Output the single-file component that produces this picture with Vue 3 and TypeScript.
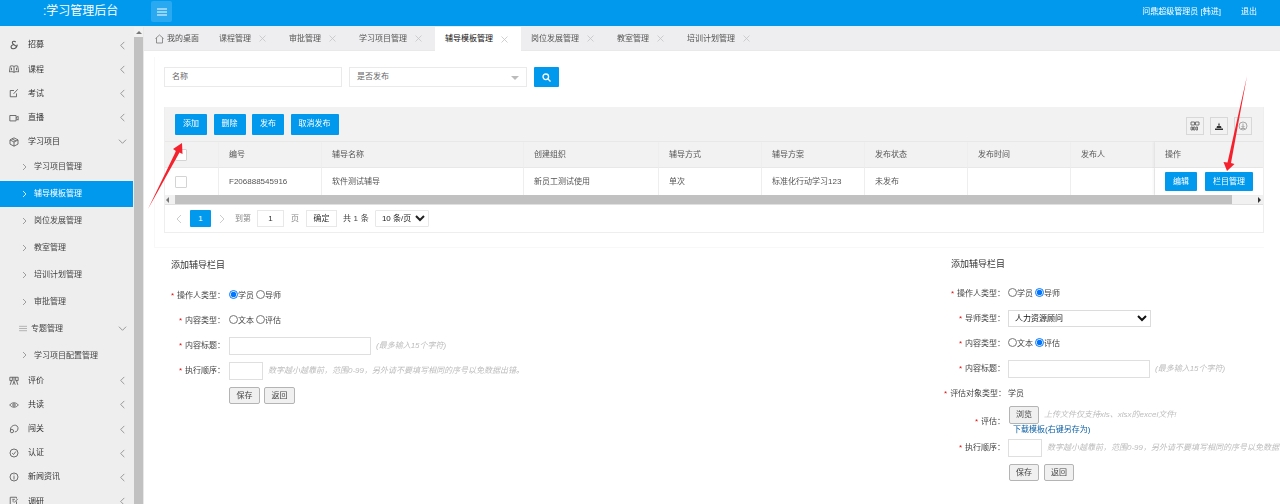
<script setup lang="ts">
interface NavItem { label: string; icon?: string; open?: boolean; sub?: boolean; active?: boolean; list?: boolean }
const nav: NavItem[] = [
  { label: '招募', icon: 'amp' },
  { label: '课程', icon: 'book' },
  { label: '考试', icon: 'edit' },
  { label: '直播', icon: 'video' },
  { label: '学习项目', icon: 'cube', open: true },
  { label: '学习项目管理', sub: true },
  { label: '辅导模板管理', sub: true, active: true },
  { label: '岗位发展管理', sub: true },
  { label: '教室管理', sub: true },
  { label: '培训计划管理', sub: true },
  { label: '审批管理', sub: true },
  { label: '专题管理', sub: true, list: true },
  { label: '学习项目配置管理', sub: true },
  { label: '评价', icon: 'rate' },
  { label: '共读', icon: 'eye' },
  { label: '闯关', icon: 'rocket' },
  { label: '认证', icon: 'check' },
  { label: '新闻资讯', icon: 'info' },
  { label: '调研', icon: 'survey' }
]
const tabs = [
  { label: '课程管理', wide: false }, { label: '审批管理', wide: false }, { label: '学习项目管理', wide: true },
  { label: '辅导模板管理', wide: true, active: true }, { label: '岗位发展管理', wide: true },
  { label: '教室管理', wide: false }, { label: '培训计划管理', wide: true }
]
const head = ['编号', '辅导名称', '创建组织', '辅导方式', '辅导方案', '发布状态', '发布时间', '发布人']
const row = ['F206888545916', '软件测试辅导', '新员工测试使用', '单次', '标准化行动学习123', '未发布', '', '']
const orderHint = '数字越小越靠前，范围0-99，另外请不要填写相同的序号以免数据出错。'
</script>

<template>
  <div class="page">
    <header class="top">
      <div class="brand">:学习管理后台</div>
      <button class="menu" aria-label="菜单">
        <svg width="10" height="8" viewBox="0 0 10 8"><path d="M0 1h10M0 4h10M0 7h10" stroke="#fff" stroke-width="1" /></svg>
      </button>
      <div class="user">问鼎超级管理员 [韩进]</div>
      <div class="logout">退出</div>
    </header>

    <div class="body">
      <aside class="side">
        <nav class="nav">
          <div
            v-for="item in nav"
            :key="item.label"
            class="nav-item"
            :class="{ sub: item.sub, active: item.active }"
          >
            <svg v-if="item.sub && item.list" class="ic list-ic" viewBox="0 0 10 8"><path d="M0 1.5h9M0 4h9M0 6.500h9" stroke="#999" fill="none" stroke-width=".8" /></svg>
            <svg v-else-if="item.sub" class="sub-arrow" viewBox="0 0 5 8"><path d="M1 1l3 3-3 3" fill="none" stroke="currentColor" stroke-width=".8" /></svg>
            <svg v-else class="ic" viewBox="0 0 12 12" fill="none" stroke="#555" stroke-width="1">
              <path v-if="item.icon === 'amp'" d="M8 2.500C7 1 4 1.200 4 3c0 2 5.500 5 5.500 5M10 5.500C9.500 8 8 10.500 5 10.500 2.500 10.500 1.500 8 3.500 6.500L5 5.500" stroke-width="1.300" />
              <path v-else-if="item.icon === 'book'" d="M6 3C4.500 2 3 2 1.500 2.500L.5 9.500C2.500 9 4.500 9 6 10c1.500-1 3.500-1 5.500-.5l-1-7C9 2 7.500 2 6 3zM6 3v7M3 4.500v3M9 4.500v3" />
              <path v-else-if="item.icon === 'edit'" d="M9 6.500V10.500H1.500V3H6M5.500 7L10.500 1.500" />
              <path v-else-if="item.icon === 'video'" d="M1 3h7.500v6.500H1zM8.500 5.500L11 4v4.500L8.500 7" />
              <path v-else-if="item.icon === 'cube'" d="M6 1l4.800 2.500v5L6 11 1.200 8.500v-5zM1.200 3.500L6 6l4.800-2.500M6 6v5M3.500 2.200L8.500 4.800" />
              <path v-else-if="item.icon === 'rate'" d="M1 1.500h10M1 1.500v4h3v-4M8 1.500v4h3v-4M6 1.500v5M3 5.500L1.500 10.500M9 5.500l1.500 5M6 6.500l-1.500 4M6 6.500l1.500 4" />
              <g v-else-if="item.icon === 'eye'"><path d="M.8 6C3.500 2.500 8.500 2.500 11.200 6 8.500 9.500 3.500 9.500.8 6z" /><circle cx="6" cy="6" r="1.500" /></g>
              <g v-else-if="item.icon === 'rocket'"><path d="M2 7.500C1 3.500 5 1 8 1.500c3 .8 3.500 4 2 6.500-.5.800-2 1.500-3 1.500" /><circle cx="3.500" cy="8.500" r="2" /></g>
              <g v-else-if="item.icon === 'check'"><circle cx="6" cy="6" r="4.800" /><path d="M3.800 6.200L5.500 7.800 8.200 4.200" /></g>
              <g v-else-if="item.icon === 'info'"><circle cx="6" cy="6" r="4.800" /><path d="M6 3v1M6 5v4" /></g>
              <path v-else d="M9 6.500V11H1.500V1.500H9V3M4 4h3M4 6h2M6 8l4.500-4.500" />
            </svg>
            <span class="nav-label">{{ item.label }}</span>
            <svg v-if="item.open || item.list" class="chev" viewBox="0 0 10 10"><path d="M1 3l4 4 4-4" fill="none" stroke="#777" stroke-width=".8" /></svg>
            <svg v-else-if="!item.sub" class="chev" viewBox="0 0 10 10"><path d="M7 1L3 5l4 4" fill="none" stroke="#777" stroke-width=".8" /></svg>
          </div>
        </nav>
        <div class="side-scroll"><span class="up"></span><span class="thumb"></span></div>
      </aside>

      <main class="main">
        <div class="tabs">
          <div class="tab home">
            <svg width="9" height="10" viewBox="0 0 9 10"><path d="M.5 4.500L4.500 1l4 3.500M1.500 4v5h6V4" fill="none" stroke="#777" stroke-width=".8" /></svg>
            <span>我的桌面</span>
          </div>
          <div v-for="t in tabs" :key="t.label" class="tab" :class="{ active: t.active, wide: t.wide }">
            <span>{{ t.label }}</span>
            <svg class="close" width="7" height="7" viewBox="0 0 7 7"><path d="M.5.500l6 6M6.500.500l-6 6" stroke="#c4c4c4" stroke-width=".8" /></svg>
          </div>
        </div>

        <section class="card">
          <div class="search">
            <div class="field name">名称</div>
            <div class="field pick">是否发布<span class="tri"></span></div>
            <button class="btn search-btn" aria-label="搜索">
              <svg width="9" height="9" viewBox="0 0 9 9"><circle cx="3.800" cy="3.800" r="2.800" fill="none" stroke="#fff" stroke-width="1.300" /><path d="M6 6l2.500 2.500" stroke="#fff" stroke-width="1.300" /></svg>
            </button>
          </div>

          <div class="grid-box">
            <div class="toolbar">
              <button class="btn">添加</button>
              <button class="btn">删除</button>
              <button class="btn">发布</button>
              <button class="btn">取消发布</button>
              <div class="tools">
                <span class="tool"><svg width="10" height="10" viewBox="0 0 10 10" fill="none" stroke="#666" stroke-width=".9"><path d="M1 1h3.500v3H1zM5.500 1H9v3H5.500zM1 6h1.500v3H1zM3.500 6H5v3H3.500zM6 6h1.500v3H6z" /></svg></span>
                <span class="tool"><svg width="10" height="10" viewBox="0 0 10 10"><path d="M1 9h8V7.500H1zM2.500 7L3 5h4l.5 2zM4 4.500l1-3 1 3z" fill="#333" /></svg></span>
                <span class="tool"><svg width="10" height="10" viewBox="0 0 10 10" fill="none" stroke="#888" stroke-width=".7"><circle cx="5" cy="5" r="4" /><path d="M5 2.500v4M3.500 5L5 6.500 6.500 5M3 7.500h4" /></svg></span>
              </div>
            </div>
            <div class="table">
              <div class="cell th chk"><span class="box"></span></div>
              <div v-for="h in head" :key="h" class="cell th">{{ h }}</div>
              <div class="cell th op">操作</div>
              <div class="cell chk"><span class="box"></span></div>
              <div v-for="(c, i) in row" :key="i" class="cell">{{ c }}</div>
              <div class="cell op ops">
                <button class="btn small">编辑</button>
                <button class="btn small">栏目管理</button>
              </div>
            </div>
            <div class="hscroll">
              <span class="arr l"></span>
              <span class="track"></span>
              <span class="arr r"></span>
            </div>
            <div class="pager">
              <svg class="pg-arrow" viewBox="0 0 6 10"><path d="M5 1L1 5l4 4" fill="none" stroke="#ccc" /></svg>
              <span class="pg-cur">1</span>
              <svg class="pg-arrow" viewBox="0 0 6 10"><path d="M1 1l4 4-4 4" fill="none" stroke="#ccc" /></svg>
              <span class="pg-text go">到第</span>
              <span class="pg-input">1</span>
              <span class="pg-text">页</span>
              <span class="pg-ok">确定</span>
              <span class="pg-total">共 1 条</span>
              <select class="pg-select"><option>10 条/页</option></select>
            </div>
          </div>
        </section>

        <section class="forms">
          <div class="form">
            <h3 class="form-title">添加辅导栏目</h3>
            <div class="frow">
              <label class="flabel"><i>*</i>操作人类型：</label>
              <div class="fval"><input class="rd" type="radio" name="a1" checked /><span>学员</span><input class="rd" type="radio" name="a1" /><span>导师</span></div>
            </div>
            <div class="frow">
              <label class="flabel"><i>*</i>内容类型：</label>
              <div class="fval"><input class="rd" type="radio" name="a2" /><span>文本</span><input class="rd" type="radio" name="a2" /><span>评估</span></div>
            </div>
            <div class="frow">
              <label class="flabel"><i>*</i>内容标题：</label>
              <div class="fval"><input class="txt" type="text" /><em>(最多输入15个字符)</em></div>
            </div>
            <div class="frow">
              <label class="flabel"><i>*</i>执行顺序：</label>
              <div class="fval"><input class="txt short" type="text" /><em>{{ orderHint }}</em></div>
            </div>
            <div class="factions">
              <button class="plain">保存</button>
              <button class="plain">返回</button>
            </div>
          </div>

          <div class="form right">
            <h3 class="form-title">添加辅导栏目</h3>
            <div class="frow">
              <label class="flabel"><i>*</i>操作人类型：</label>
              <div class="fval"><input class="rd" type="radio" name="b1" /><span>学员</span><input class="rd" type="radio" name="b1" checked /><span>导师</span></div>
            </div>
            <div class="frow">
              <label class="flabel"><i>*</i>导师类型：</label>
              <div class="fval"><select class="fselect"><option>人力资源顾问</option></select></div>
            </div>
            <div class="frow">
              <label class="flabel"><i>*</i>内容类型：</label>
              <div class="fval"><input class="rd" type="radio" name="b2" /><span>文本</span><input class="rd" type="radio" name="b2" checked /><span>评估</span></div>
            </div>
            <div class="frow">
              <label class="flabel"><i>*</i>内容标题：</label>
              <div class="fval"><input class="txt" type="text" /><em>(最多输入15个字符)</em></div>
            </div>
            <div class="frow">
              <label class="flabel"><i>*</i>评估对象类型：</label>
              <div class="fval">学员</div>
            </div>
            <div class="frow upload">
              <label class="flabel"><i>*</i>评估：</label>
              <div class="fupload">
                <div class="fval"><button class="plain browse">浏览</button><em>上传文件仅支持xls、xlsx的excel文件!</em></div>
                <a class="dl">下载模板(右键另存为)</a>
              </div>
            </div>
            <div class="frow tight">
              <label class="flabel"><i>*</i>执行顺序：</label>
              <div class="fval"><input class="txt short" type="text" /><em class="nowrap">{{ orderHint }}</em></div>
            </div>
            <div class="factions">
              <button class="plain">保存</button>
              <button class="plain">返回</button>
            </div>
          </div>
        </section>
      </main>
    </div>

    <svg class="arrows" width="1280" height="504" viewBox="0 0 1280 504">
      <path d="M148 209L176 151 173 149 182 143 182.500 154 179.500 152.500z" fill="#f5222d" />
      <path d="M1247 76L1231 163 1234.500 164 1227 171 1223.500 162 1227.500 162.500z" fill="#f5222d" />
    </svg>
  </div>
</template>

<style>
html, body { margin: 0; height: 504px; overflow: hidden; background: #fff; }
</style>

<style scoped>
.page {
  position: relative;
  width: 1280px;
  height: 504px;
  overflow: hidden;
  font: 8px/1.2 "Liberation Sans", "Noto Sans CJK SC", sans-serif;
  color: #555;
  filter: blur(0.3px);
}
button { font: inherit; cursor: pointer; }
.top {
  height: 27px;
  box-sizing: border-box;
  padding-bottom: 3px;
  background: #0099ee;
  border-bottom: 1px solid #e4eef5;
  display: flex;
  align-items: center;
  color: #fff;
}
.brand { width: 151px; padding-left: 43px; box-sizing: border-box; font-size: 12px; }
.menu {
  width: 21px;
  height: 21px;
  border: 0;
  border-radius: 2px;
  background: #2aa9f0;
  display: flex;
  align-items: center;
  justify-content: center;
  padding: 0;
}
.user { margin-left: auto; }
.logout { margin: 0 23px 0 20px; }
.body { display: flex; height: 477px; }
.side { width: 144px; flex: none; display: flex; background: #eeeeee; overflow: hidden; }
.nav { width: 134px; flex: none; padding-top: 6.200px; }
.nav-item {
  height: 24.1px;
  display: flex;
  align-items: center;
  padding: 0 7px 0 9px;
  color: #333;
  position: relative;
}
.nav-item.sub { height: 26.9px; color: #444; padding-left: 22px; }
.nav-item.active { background: #0099ee; color: #fff; margin-right: 1px; }
.ic { width: 10px; height: 10px; flex: none; margin-right: 9px; }
.list-ic { width: 9px; height: 7px; margin: 0 3px 0 -3px; }
.sub-arrow { width: 5px; height: 8px; color: #888; margin-right: 7px; flex: none; }
.active .sub-arrow { color: #fff; }
.nav-label { white-space: nowrap; }
.chev { width: 9px; height: 9px; margin-left: auto; flex: none; }
.side-scroll { width: 10px; flex: none; background: #f1f1f1; position: relative; border-right: 1px solid #e8e8e8; box-sizing: border-box; }
.up {
  position: absolute; left: 2px; top: 4px;
  border: 3px solid transparent; border-top: 0; border-bottom: 3px solid #777;
}
.thumb { position: absolute; left: 0; right: 0; top: 10px; bottom: 0; background: #c1c1c1; }
.main { flex: 1; min-width: 0; }
.tabs {
  height: 24px;
  box-sizing: border-box;
  background: #eeeef0;
  display: flex;
  padding-left: 1px;
  color: #555;
  border-bottom: 1px solid #e9e9e9;
}
.tab {
  width: 70px;
  box-sizing: border-box;
  display: flex;
  align-items: center;
  padding-left: 10px;
  gap: 7.500px;
  white-space: nowrap;
}
.tab.wide { width: 86px; }
.tab.home { width: 64px; gap: 3px; }
.tab.active { background: #fff; color: #111; height: 24px; }
.card {
  margin: 6px 16px 0 10px;
  padding: 10px 0 14px 9px;
  border: 1px solid #f8f8f8;
  border-width: 0 0 1px 1px;
}
.search { display: flex; gap: 7px; height: 20px; }
.field {
  box-sizing: border-box;
  border: 1px solid #eaeaea;
  display: flex;
  align-items: center;
  padding-left: 7px;
  color: #666;
  background: #fff;
}
.name { width: 178px; }
.pick { width: 178px; position: relative; }
.tri {
  position: absolute; right: 7px; top: 8px;
  border: 4px solid transparent; border-bottom: 0; border-top: 4px solid #bbb;
}
.btn {
  height: 21px;
  padding: 0 8px;
  background: #0099ee;
  color: #fff;
  border: 0;
  border-radius: 1px;
  white-space: nowrap;
}
.search-btn { width: 25px; height: 20px; padding: 0; display: flex; align-items: center; justify-content: center; }
.grid-box { margin-top: 20px; width: 1100px; border: 1px solid #eeeeee; border-top: 0; box-sizing: border-box; }
.toolbar {
  height: 35px;
  background: #f2f2f2;
  display: flex;
  align-items: center;
  gap: 6.500px;
  padding: 0 11px 0 10px;
  border-bottom: 1px solid #e8e8e8;
  box-sizing: border-box;
}
.tools { margin-left: auto; display: flex; gap: 6px; padding-top: 3px; }
.tool {
  width: 18px; height: 18px; box-sizing: border-box;
  border: 1px solid #d8d8d8;
  display: flex; align-items: center; justify-content: center;
}
.table {
  display: grid;
  grid-template-columns: 54px 103px 202px 135px 103px 103px 103px 103px 84px 1fr;
}
.cell {
  height: 27px;
  box-sizing: border-box;
  display: flex;
  align-items: center;
  padding-left: 10px;
  border-right: 1px solid #eeeeee;
  background: #fff;
  color: #555;
  white-space: nowrap;
}
.th { height: 26px; background: #f2f2f2; border-bottom: 1px solid #e8e8e8; }
.op { border-right: 0; box-shadow: -2px 0 2px rgba(0, 0, 0, .04); }
.ops { gap: 8px; }
.btn.small { height: 19px; }
.box {
  width: 12px; height: 12px;
  border: 1px solid #d4d4d4;
  border-radius: 1px;
  background: #fff;
  box-sizing: border-box;
}
.hscroll { height: 10px; display: flex; align-items: center; background: #f1f1f1; border-bottom: 1px solid #e0e0e0; box-sizing: border-box; }
.arr { width: 10px; position: relative; height: 10px; }
.arr.l::before, .arr.r::before {
  content: ""; position: absolute; top: 2px;
  border: 3px solid transparent;
}
.arr.l::before { left: 1px; border-left: 0; border-right: 3px solid #777; }
.arr.r::before { right: 2px; border-right: 0; border-left: 3px solid #333; }
.track { flex: 0 0 1057px; height: 9px; background: #c1c1c1; }
.hscroll .r { margin-left: auto; }
.pager { height: 27px; display: flex; align-items: center; padding-left: 11px; background: #fff; }
.pg-arrow { width: 6px; height: 10px; }
.pg-cur {
  width: 21px; height: 17px; margin: 0 8px;
  background: #0099ee; color: #fff; border-radius: 1px;
  display: flex; align-items: center; justify-content: center;
}
.pg-text { color: #888; }
.go { margin-left: 10px; margin-right: 6px; }
.pg-input, .pg-ok {
  height: 17px; box-sizing: border-box;
  border: 1px solid #e8e8e8;
  display: flex; align-items: center; justify-content: center;
  color: #333;
}
.pg-input { width: 27px; margin-right: 7px; }
.pg-ok { width: 31px; margin-left: 7px; }
.pg-total { margin: 0 6px 0 6px; color: #444; letter-spacing: .2px; }
.pg-select {
  width: 54px; height: 17px; padding: 0 0 0 2px;
  font: inherit; color: #222;
  border: 1px solid #e8e8e8;
  background: #fff;
  border-radius: 1px;
}
.forms { display: flex; }
.form { width: 800px; flex: none; padding-top: 10px; }
.form.right { width: auto; flex: 1; min-width: 0; padding-top: 9px; }
.form-title {
  margin: 0 0 11px 27px;
  font-size: 9px;
  font-weight: 400;
  line-height: 14px;
  color: #333;
}
.form.right .form-title { margin: 0 0 10px 7px; }
.frow { display: flex; align-items: center; height: 25px; }
.form.right .frow.upload { height: 31px; align-items: flex-start; }
.form.right .frow.upload .flabel { padding-top: 11px; }
.form.right .frow.tight { height: 22px; }
.flabel {
  width: 81px;
  margin-right: 4px;
  box-sizing: border-box;
  text-align: right;
  flex: none;
  color: #444;
  white-space: nowrap;
}
.form.right .flabel { width: 61px; margin-right: 3px; }
.flabel i { color: #e01010; font-style: normal; margin-right: 3px; }
.fval { display: flex; align-items: center; white-space: nowrap; color: #444; }
.rd { width: 9px; height: 9px; margin: -2px 0 0; flex: none; }
.fval span + .rd { margin-left: 2px; }
.txt {
  width: 142px; height: 18px; box-sizing: border-box;
  border: 1px solid #dfdfdf;
  padding: 0;
  background: #fff;
}
.txt.short { width: 34px; }
.fval em { color: #bdbdbd; font-style: italic; margin-left: 5px; white-space: nowrap; }
.factions { display: flex; gap: 4px; margin: 0 0 0 85px; padding-top: 4px; }
.form.right .factions { margin: 5px 0 0 65px; gap: 5px; padding-top: 0; }
.plain {
  width: 31px; height: 17px;
  padding: 0;
  background: #f0f0f0;
  border: 1px solid #b4b4b4;
  border-radius: 2px;
  color: #444;
  box-sizing: border-box;
}
.form.right .plain { width: 30px; }
.form.right .plain.browse { height: 18px; }
.fupload { margin: 0 0 0 1px; }
.dl { display: block; color: #0b5fa5; margin: 0 0 0 4px; line-height: 11px; }
.fselect {
  width: 143px; height: 17px; font: inherit; color: #111;
  border: 1px solid #dcdcdc; background: #fff; padding: 0 0 0 2px;
}
.arrows { position: absolute; left: 0; top: 0; pointer-events: none; }
</style>
